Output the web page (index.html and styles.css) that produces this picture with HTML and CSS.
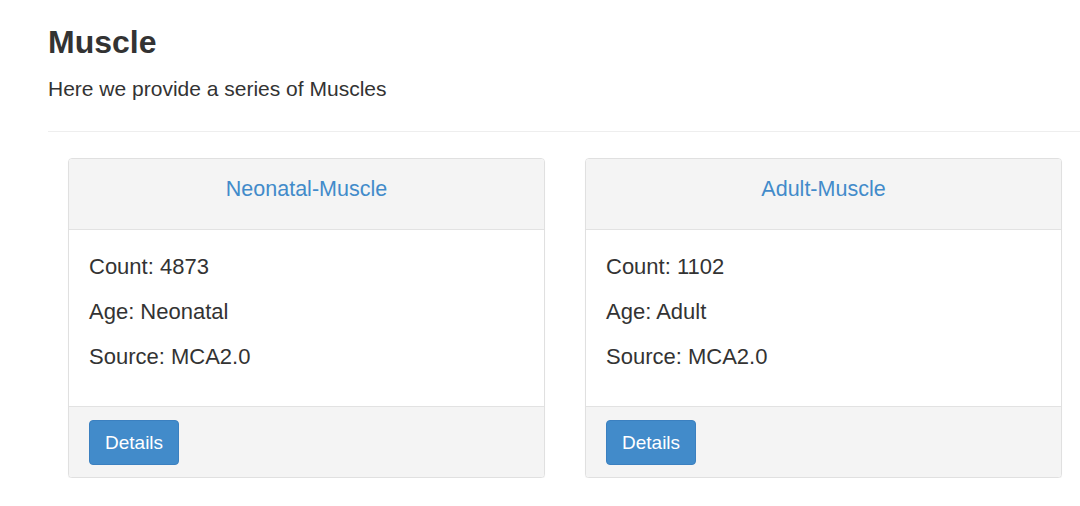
FILE: index.html
```html
<!DOCTYPE html>
<html lang="en">
<head>
<meta charset="utf-8">
<title>Muscle</title>
<link rel="stylesheet" href="styles.css">
</head>
<body>
<div class="page">
  <h1 class="title">Muscle</h1>
  <p class="lead">Here we provide a series of Muscles</p>
  <hr class="rule">
  <div class="cards">
    <div class="card">
      <div class="card-head"><a class="card-title" href="#">Neonatal-Muscle</a></div>
      <div class="card-body">
        <p class="line">Count: 4873</p>
        <p class="line">Age: Neonatal</p>
        <p class="line">Source: MCA2.0</p>
      </div>
      <div class="card-foot"><button class="btn" type="button">Details</button></div>
    </div>
    <div class="card">
      <div class="card-head"><a class="card-title" href="#">Adult-Muscle</a></div>
      <div class="card-body">
        <p class="line">Count: 1102</p>
        <p class="line">Age: Adult</p>
        <p class="line">Source: MCA2.0</p>
      </div>
      <div class="card-foot"><button class="btn" type="button">Details</button></div>
    </div>
  </div>
</div>
</body>
</html>
```

FILE: styles.css
```css
html, body {
  margin: 0;
  padding: 0;
  background: #fff;
}
body {
  font-family: "Liberation Sans", Arial, sans-serif;
  color: #333;
}
.page {
  padding: 25px 0 0 48px;
}
.title {
  margin: 0;
  font-size: 32px;
  line-height: 35px;
  font-weight: 700;
  color: #333;
}
.lead {
  margin: 15px 0 0;
  font-size: 21px;
  line-height: 28px;
}
.rule {
  margin: 28px 0 0;
  border: 0;
  border-top: 1px solid #eee;
  height: 0;
}
.cards {
  display: grid;
  grid-template-columns: 477px 477px;
  column-gap: 40px;
  margin-top: 26px;
  padding-left: 20px;
}
.card {
  border: 1px solid #e0e0e0;
  border-radius: 4px;
  background: #fff;
  box-shadow: 0 1px 1px rgba(0, 0, 0, 0.05);
  overflow: hidden;
}
.card-head {
  background: #f4f4f4;
  border-bottom: 1px solid #e2e2e2;
  padding: 16px 20px 26px;
  text-align: center;
  font-size: 21.5px;
  line-height: 28px;
}
.card-title {
  color: #428bca;
  text-decoration: none;
}
.card-body {
  padding: 23px 20px 18px;
}
.line {
  margin: 0 0 17px;
  font-size: 22px;
  line-height: 28px;
}
.card-foot {
  background: #f4f4f4;
  border-top: 1px solid #e2e2e2;
  padding: 13px 20px 12px;
}
.btn {
  display: block;
  font-family: "Liberation Sans", Arial, sans-serif;
  font-size: 19px;
  line-height: 29px;
  padding: 7px 15px;
  color: #fff;
  background: #428bca;
  border: 1px solid #3b80c0;
  border-radius: 4px;
  cursor: pointer;
}
```
